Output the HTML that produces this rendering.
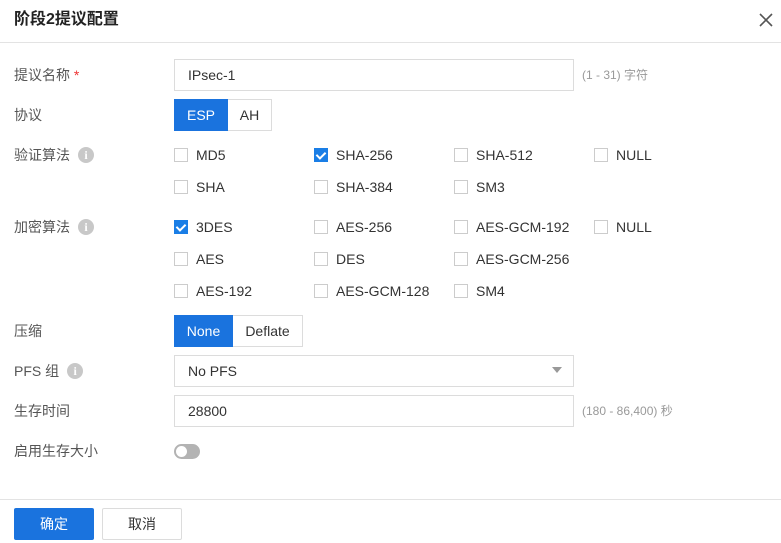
<!DOCTYPE html>
<html><head><meta charset="utf-8"><style>
*{box-sizing:border-box;margin:0;padding:0}
body{width:781px;height:543px;background:#fff;font-family:"Liberation Sans","Noto Sans CJK SC",sans-serif;font-size:14px;color:#333;position:relative;overflow:hidden}
.a{position:absolute}
.lbl{position:absolute;left:14px;color:#555;font-size:14px;line-height:20px;white-space:nowrap}
.inp{position:absolute;left:174px;width:400px;height:32px;border:1px solid #dcdcdc;padding-left:13px;line-height:30px;color:#333}
.hint{position:absolute;left:582px;font-size:12px;color:#999;line-height:16px}
.cb{position:absolute;line-height:20px;padding-left:22px;color:#333}
.cb:before{content:"";position:absolute;left:0;top:3px;width:14px;height:14px;border:1px solid #ccc;background:#fff;box-sizing:border-box}
.cb.on:before{background:#1a7ee6;border-color:#1a7ee6}
.cb.on:after{content:"";position:absolute;left:4px;top:5px;width:4px;height:7px;border:solid #fff;border-width:0 2px 2px 0;transform:rotate(45deg)}
.info{display:inline-block;width:16px;height:16px;border-radius:50%;background:#c8c8c8;color:#fff;font-size:12px;font-weight:bold;text-align:center;line-height:16px;margin-left:8px;vertical-align:top;margin-top:2px;font-family:"Liberation Serif",serif}
.seg{position:absolute;height:32px;border:1px solid #dcdcdc;line-height:30px;text-align:center;color:#333}
.seg.on{background:#1a73de;border-color:#1a73de;color:#fff}
</style></head><body>
<div class="a" style="left:14px;top:9px;font-size:16px;font-weight:bold;color:#222;line-height:22px">阶段2提议配置</div>
<svg class="a" style="left:759px;top:13px" width="14" height="14"><path d="M1 1L13 13M13 1L1 13" stroke="#555" stroke-width="1.6"/></svg>
<div class="a" style="left:0;top:42px;width:781px;height:1px;background:#e3e3e3"></div>

<div class="lbl" style="top:65px">提议名称 <span style="color:#e33">*</span></div>
<div class="inp" style="top:59px">IPsec-1</div>
<div class="hint" style="top:67px">(1 - 31) 字符</div>

<div class="lbl" style="top:105px">协议</div>
<div class="seg on" style="left:174px;top:99px;width:54px">ESP</div>
<div class="seg" style="left:228px;top:99px;width:44px;border-left:none">AH</div>

<div class="lbl" style="top:145px">验证算法<span class="info">i</span></div>
<div class="cb" style="left:174px;top:145px">MD5</div>
<div class="cb on" style="left:314px;top:145px">SHA-256</div>
<div class="cb" style="left:454px;top:145px">SHA-512</div>
<div class="cb" style="left:594px;top:145px">NULL</div>
<div class="cb" style="left:174px;top:177px">SHA</div>
<div class="cb" style="left:314px;top:177px">SHA-384</div>
<div class="cb" style="left:454px;top:177px">SM3</div>

<div class="lbl" style="top:217px">加密算法<span class="info">i</span></div>
<div class="cb on" style="left:174px;top:217px">3DES</div>
<div class="cb" style="left:314px;top:217px">AES-256</div>
<div class="cb" style="left:454px;top:217px">AES-GCM-192</div>
<div class="cb" style="left:594px;top:217px">NULL</div>
<div class="cb" style="left:174px;top:249px">AES</div>
<div class="cb" style="left:314px;top:249px">DES</div>
<div class="cb" style="left:454px;top:249px">AES-GCM-256</div>
<div class="cb" style="left:174px;top:281px">AES-192</div>
<div class="cb" style="left:314px;top:281px">AES-GCM-128</div>
<div class="cb" style="left:454px;top:281px">SM4</div>

<div class="lbl" style="top:321px">压缩</div>
<div class="seg on" style="left:174px;top:315px;width:59px">None</div>
<div class="seg" style="left:233px;top:315px;width:70px;border-left:none">Deflate</div>

<div class="lbl" style="top:361px">PFS 组<span class="info">i</span></div>
<div class="inp" style="top:355px">No PFS</div>
<svg class="a" style="left:552px;top:367px" width="10" height="7"><path d="M0 0H10L5 6Z" fill="#999"/></svg>

<div class="lbl" style="top:401px">生存时间</div>
<div class="inp" style="top:395px">28800</div>
<div class="hint" style="top:403px">(180 - 86,400) 秒</div>

<div class="lbl" style="top:441px">启用生存大小</div>
<div class="a" style="left:174px;top:444px;width:26px;height:15px;border-radius:8px;background:#b3b3b3"></div>
<div class="a" style="left:176px;top:446px;width:11px;height:11px;border-radius:50%;background:#fff"></div>

<div class="a" style="left:0;top:499px;width:781px;height:1px;background:#e3e3e3"></div>
<div class="a" style="left:14px;top:508px;width:80px;height:32px;border-radius:2px;background:#1a73de;color:#fff;text-align:center;line-height:32px">确定</div>
<div class="a" style="left:102px;top:508px;width:80px;height:32px;border-radius:2px;border:1px solid #dcdcdc;color:#333;text-align:center;line-height:30px">取消</div>
</body></html>
